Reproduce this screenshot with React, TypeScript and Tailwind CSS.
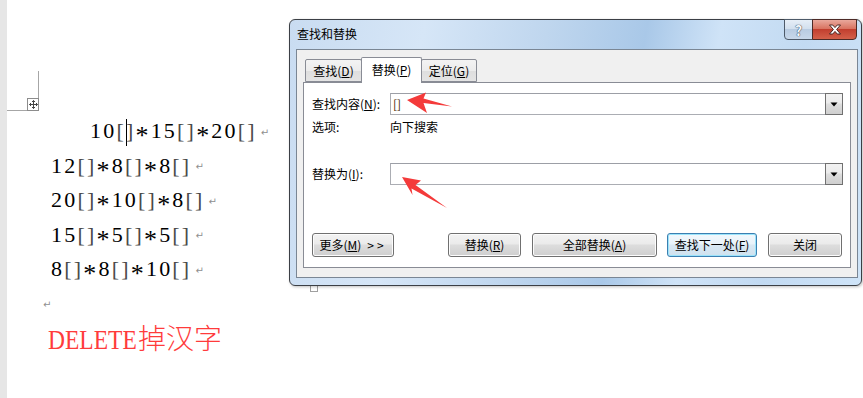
import type { ReactNode } from 'react'

const docFont = "font-['Liberation_Serif','Noto_Sans_CJK_SC',serif]"
const uiFont = "font-['Noto_Sans_CJK_SC','Noto_Sans',sans-serif]"

function Mark({ className = '' }: { className?: string }) {
  return (
    <span
      className={`inline-block align-middle font-['DejaVu_Sans',sans-serif] text-[10px] leading-none tracking-normal text-[#8f8f8f] ${className}`}
    >
      ↵
    </span>
  )
}

function Br() {
  return <span className="text-[#4a4a4a]">[]</span>
}

function Star() {
  return <span className="inline-block translate-y-[6px] text-[26px] leading-none">*</span>
}

function Line({ parts }: { parts: string[] }) {
  return (
    <div className="h-[34.5px] leading-[34.5px] whitespace-nowrap">
      {parts.map((p, i) => (
        <span key={i}>
          {p}
          <Br />
          {i < parts.length - 1 && <Star />}
        </span>
      ))}
      <Mark className="ml-[4px]" />
    </div>
  )
}

function WinButton({ children, w, focused = false }: { children: ReactNode; w: string; focused?: boolean }) {
  return (
    <div
      className={`${w} h-[24px] flex items-center justify-center rounded-[3px] border text-[12px] text-black ${
        focused
          ? 'border-[#3c7fb1] bg-[linear-gradient(#f2f8fc_0%,#e9f3fa_45%,#d9e8f3_50%,#cfe1ee_100%)] shadow-[inset_0_0_0_1px_#9be4fb]'
          : 'border-[#707070] bg-[linear-gradient(#f2f2f2_0%,#ebebeb_45%,#dddddd_50%,#cfcfcf_100%)] shadow-[inset_0_0_0_1px_#fcfcfc]'
      }`}
    >
      {children}
    </div>
  )
}

function Combo({ children }: { children?: ReactNode }) {
  return (
    <div className="flex-1 h-[22px] flex items-center border border-[#abadb3] border-t-[#9c9fa6] bg-white">
      <div className="flex-1 pl-[2px] text-[12px] leading-none text-black">{children}</div>
      <div className="w-[18px] h-[22px] -my-px -mr-px flex items-center justify-center border border-[#707070] bg-[linear-gradient(#f2f2f2_0%,#ebebeb_45%,#dddddd_50%,#cfcfcf_100%)]">
        <svg width="8" height="5" viewBox="0 0 8 5">
          <path d="M0.5 0.5h7L4 4.5z" fill="#000" />
        </svg>
      </div>
    </div>
  )
}

function Tab({ children, active = false, w }: { children: ReactNode; active?: boolean; w: string }) {
  return (
    <div
      className={`${w} -ml-px first:ml-0 flex items-center justify-center rounded-t-[2px] border border-[#898c95] text-[12px] text-black ${
        active
          ? 'relative z-10 h-[26px] -mb-px border-b-0 bg-white pb-[2px]'
          : 'h-[23px] bg-[linear-gradient(#f3f3f3_0%,#ececec_50%,#dedede_51%,#e4e4e4_100%)]'
      }`}
    >
      {children}
    </div>
  )
}

export default function App() {
  return (
    <div className="relative flex w-[863px] h-[398px] overflow-hidden bg-white">
      <div className="w-[7px] shrink-0 bg-[#e6e6e6]" />

      <div className={`flex-1 ${docFont}`}>
        <div className="mt-[71px] w-[32px] h-[40px] flex items-end justify-end border-r border-b border-[#a6a6a6]">
          <div className="w-[12px] h-[13px] -mb-px -mr-px flex items-center justify-center border border-[#8c8c8c] bg-white">
            <svg width="9" height="9" viewBox="0 0 9 9" fill="none" stroke="#444" strokeWidth="1">
              <path d="M4.5 0.5v8M0.5 4.5h8M3 2l1.5-1.5L6 2M3 7l1.5 1.5L6 7M2 3L0.5 4.5 2 6M7 3l1.5 1.5L7 6" />
            </svg>
          </div>
        </div>

        <div className="mt-[3px] pl-[44px] text-[22px] tracking-[2.2px] text-black">
          <div className="h-[34.5px] leading-[34.5px] whitespace-nowrap pl-[39px]">
            10<span className="text-[#4a4a4a]">[</span>
            <span className="inline-block w-px h-[27px] -mr-px align-middle bg-black" />
            <span className="text-[#4a4a4a]">]</span>
            <Star />
            15
            <Br />
            <Star />
            20
            <Br />
            <Mark className="ml-[4px]" />
          </div>
          <Line parts={['12', '8', '8']} />
          <Line parts={['20', '10', '8']} />
          <Line parts={['15', '5', '5']} />
          <Line parts={['8', '8', '10']} />
          <div className="h-[34.5px] leading-[34.5px]">
            <Mark className="-ml-[8px]" />
          </div>
          <div className="-ml-[3px] h-[38px] leading-[38px] text-[28px] tracking-normal whitespace-nowrap text-[#ff3b3b]">
            <span className="inline-block w-[90px] align-top">
              <span className="inline-block origin-left scale-x-[0.84]">DELETE</span>
            </span>
            <span className="font-light">掉汉字</span>
          </div>
        </div>
      </div>

      <div className="absolute left-[310px] top-[280px] w-[8px] h-[12px] border border-[#a0a0a0]" />

      <div
        className={`absolute left-[289px] top-[19px] w-[573px] h-[267px] flex flex-col rounded-[6px] border border-[#3b3f45] bg-[linear-gradient(100deg,#c9dcf1_0%,#d6e6f7_22%,#bfd6ee_42%,#a9c8e8_58%,#cfe3f7_70%,#c2daf2_84%,#cfe4f8_100%)] shadow-[1px_1px_3px_rgba(0,0,0,0.25)] ${uiFont}`}
      >
        <div className="h-[29px] flex items-start">
          <span className="ml-[7px] mt-[6px] text-[12px] leading-[16px] text-black">查找和替换</span>
          <div className="ml-auto mr-[4px] -mt-px flex">
            <div className="w-[29px] h-[21px] flex items-center justify-center rounded-bl-[4px] border border-[#4d5a69] bg-[linear-gradient(#e6eef7_0%,#d3e0ee_45%,#b9cce2_50%,#c8d8ea_100%)] text-[14px] font-bold leading-none text-[#f4f7fb] [text-shadow:0_0_1px_#2b3a4c,0_0_1px_#2b3a4c]">
              ?
            </div>
            <div className="w-[45px] h-[21px] -ml-px flex items-center justify-center rounded-br-[4px] border border-[#4d2a26] bg-[linear-gradient(#e9a89c_0%,#d97462_45%,#c23f2f_50%,#d4604a_100%)]">
              <svg width="14" height="11" viewBox="0 0 14 11">
                <path
                  d="M1.5 1h3.2L7 3.6 9.3 1h3.2L8.6 5.5l3.9 4.5H9.3L7 7.4 4.7 10H1.5l3.9-4.5z"
                  fill="#fff"
                  stroke="#3a1a16"
                  strokeWidth="0.9"
                  strokeLinejoin="round"
                />
              </svg>
            </div>
          </div>
        </div>

        <div className="ml-[6px] mr-[3px] mb-[7px] flex-1 flex flex-col border border-[#7a8694] bg-[#f0f0f0] px-[6px] pt-[7px] pb-[9px]">
          <div className="h-[25px] pl-[2px] flex items-end">
            <Tab w="w-[57px]">
              查找(<u>D</u>)
            </Tab>
            <Tab w="w-[61px]" active>
              替换(<u>P</u>)
            </Tab>
            <Tab w="w-[56px]">
              定位(<u>G</u>)
            </Tab>
          </div>

          <div className="flex-1 flex flex-col border border-[#898c95] bg-white pl-[8px] pr-[7px] pt-[10px] pb-[10px] text-[12px] text-black">
            <div className="h-[22px] flex items-center">
              <span className="w-[78px]">
                查找内容(<u>N</u>):
              </span>
              <Combo>
                <span className="text-[#4a2a00]">[]</span>
              </Combo>
            </div>
            <div className="mt-[4px] h-[16px] flex items-center">
              <span className="w-[78px]">选项:</span>
              <span>向下搜索</span>
            </div>
            <div className="mt-[28px] h-[22px] flex items-center">
              <span className="w-[78px]">
                替换为(<u>I</u>):
              </span>
              <Combo />
            </div>
            <div className="mt-[48px] flex items-center pr-[1px]">
              <WinButton w="w-[82px]">
                <span>
                  更多(<u>M</u>)
                </span>
                <span className="ml-[6px] tracking-[3px]">&gt;&gt;</span>
              </WinButton>
              <div className="ml-auto flex gap-[11px]">
                <WinButton w="w-[73px]">
                  替换(<u>R</u>)
                </WinButton>
                <WinButton w="w-[125px]">
                  全部替换(<u>A</u>)
                </WinButton>
                <div className="-ml-px">
                  <WinButton w="w-[90px]" focused>
                    查找下一处(<u>F</u>)
                  </WinButton>
                </div>
                <WinButton w="w-[74px]">关闭</WinButton>
              </div>
            </div>
          </div>
        </div>
      </div>

      <svg className="pointer-events-none absolute left-0 top-0 z-20" width="863" height="398" viewBox="0 0 863 398">
        <path d="M407 100L426 92.5 423.5 98.5 452 106.5 423.5 103 427 113z" fill="#f43a3a" />
        <path d="M402 177L421 180.5 415.5 185 447 208 411.5 188.5 412.5 195z" fill="#f43a3a" />
      </svg>
    </div>
  )
}
